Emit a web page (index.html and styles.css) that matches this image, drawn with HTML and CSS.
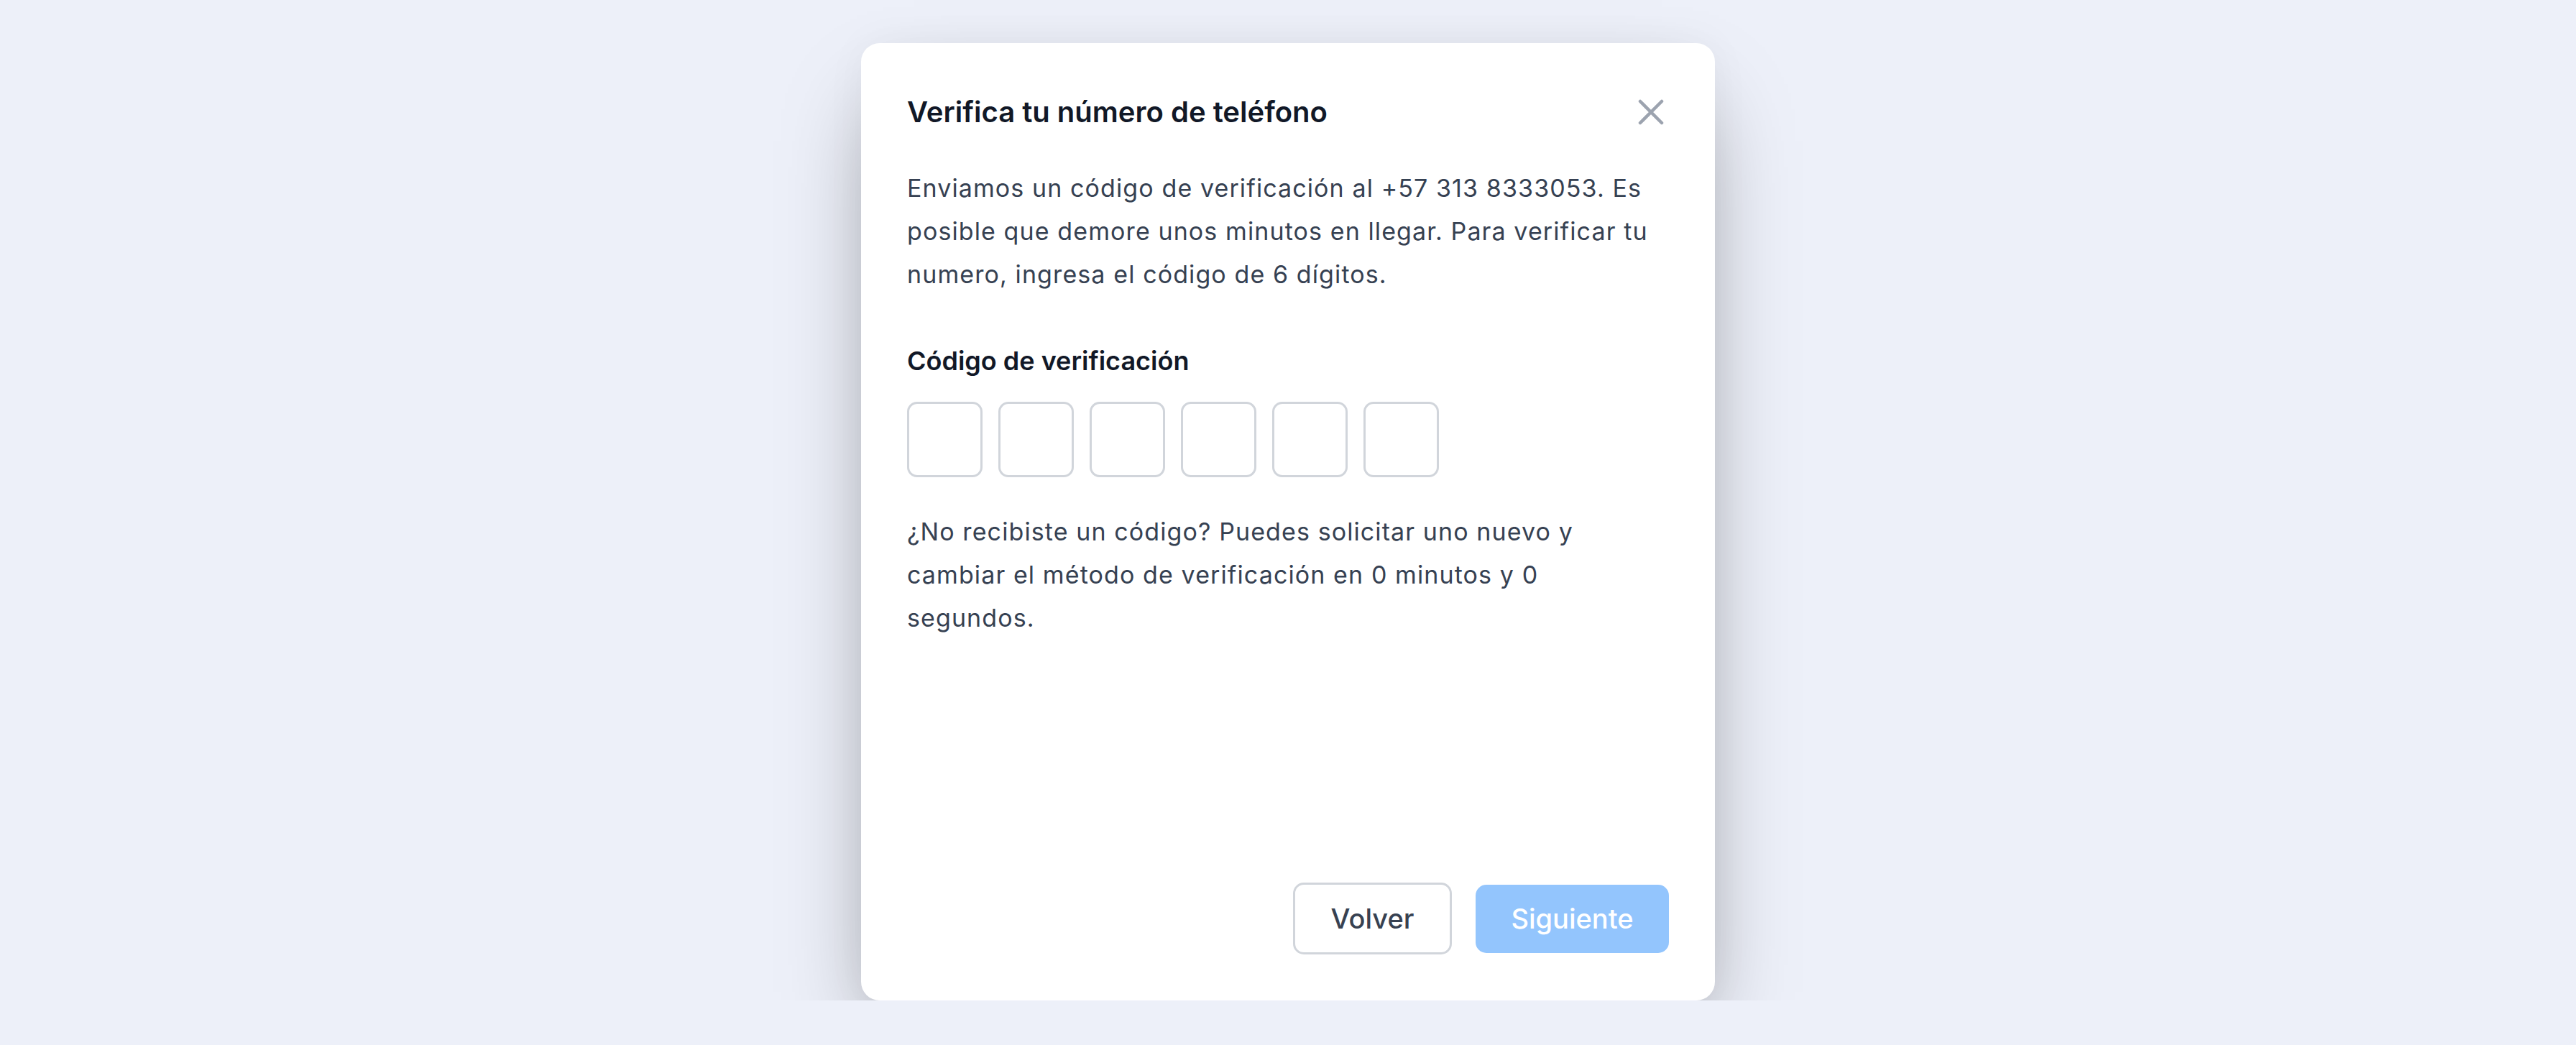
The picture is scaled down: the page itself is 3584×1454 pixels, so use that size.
FILE: index.html
```html
<!DOCTYPE html>
<html lang="es">
<head>
  <meta charset="UTF-8">
  <title>Verifica tu número de teléfono</title>
  <link rel="stylesheet" href="styles.css">
</head>
<body>
  <!-- Modal de verificación -->
  <div class="modal">
    <div class="modal-header">
      <h2 class="modal-title">Verifica tu número de teléfono</h2>
      <button class="close-button" aria-label="Cerrar">
        <svg width="36" height="36" viewBox="0 0 36 36" fill="none" stroke="currentColor" stroke-width="4.5" stroke-linecap="round">
          <path d="M3 3L33 33M33 3L3 33"/>
        </svg>
      </button>
    </div>

    <p class="modal-text">Enviamos un código de verificación al +57 313 8333053. Es posible que demore unos minutos en llegar. Para verificar tu numero, ingresa el código de 6 dígitos.</p>

    <label class="code-label">Código de verificación</label>
    <div class="code-inputs">
      <input type="text" maxlength="1" class="code-digit">
      <input type="text" maxlength="1" class="code-digit">
      <input type="text" maxlength="1" class="code-digit">
      <input type="text" maxlength="1" class="code-digit">
      <input type="text" maxlength="1" class="code-digit">
      <input type="text" maxlength="1" class="code-digit">
    </div>

    <p class="modal-text resend-text">¿No recibiste un código? Puedes solicitar uno nuevo y cambiar el método de verificación en 0 minutos y 0 segundos.</p>

    <div class="modal-footer">
      <button class="btn btn-secondary">Volver</button>
      <button class="btn btn-primary" disabled>Siguiente</button>
    </div>
  </div>
</body>
</html>
```

FILE: styles.css
```css
body {
  font-family: Inter, "Noto Sans", sans-serif;
  background-color: #edf0f9;
  margin: 0;
  padding: 60px 0 0;
  display: flex;
  justify-content: center;
}
.modal {
  width: 1188px;
  height: 1332px;
  box-sizing: border-box;
  padding: 64px;
  background: #fff;
  border-radius: 26px;
  box-shadow: 0 62px 125px -30px rgba(0, 0, 0, 0.4), 0 0 60px rgba(0, 0, 0, 0.04);
  display: flex;
  flex-direction: column;
}
.modal-header {
  height: 64px;
  display: flex;
  align-items: center;
  justify-content: space-between;
  margin-bottom: 44px;
}
.modal-title {
  margin: 0;
  font-size: 40px;
  font-weight: 600;
  line-height: 56px;
  color: #111827;
}
.close-button {
  border: none;
  background: none;
  padding: 0;
  margin-right: 7px;
  color: #9ca3af;
  cursor: pointer;
  display: flex;
}
.modal-text {
  margin: 0;
  font-size: 34px;
  line-height: 60px;
  letter-spacing: 1.1px;
  color: #364152;
}
.code-label {
  display: block;
  margin-top: 65px;
  font-size: 36px;
  font-weight: 600;
  line-height: 50px;
  color: #111827;
}
.code-inputs {
  display: flex;
  gap: 22px;
  margin-top: 32px;
}
.code-digit {
  width: 105px;
  height: 105px;
  box-sizing: border-box;
  border: 3px solid #d1d5db;
  border-radius: 14px;
  padding: 0;
  font-family: inherit;
  font-size: 40px;
  text-align: center;
  color: #111827;
}
.resend-text {
  margin-top: 46px;
}
.modal-footer {
  margin-top: auto;
  display: flex;
  justify-content: flex-end;
  align-items: center;
  gap: 33px;
}
.btn {
  font-family: inherit;
  font-size: 38px;
  font-weight: 500;
  border-radius: 15px;
  cursor: pointer;
}
.btn-secondary {
  width: 221px;
  height: 100px;
  border: 3px solid #d1d5db;
  background: #fff;
  color: #374151;
}
.btn-primary {
  width: 269px;
  height: 95px;
  border: none;
  background: #93c5fd;
  color: #fff;
  cursor: default;
}
```
